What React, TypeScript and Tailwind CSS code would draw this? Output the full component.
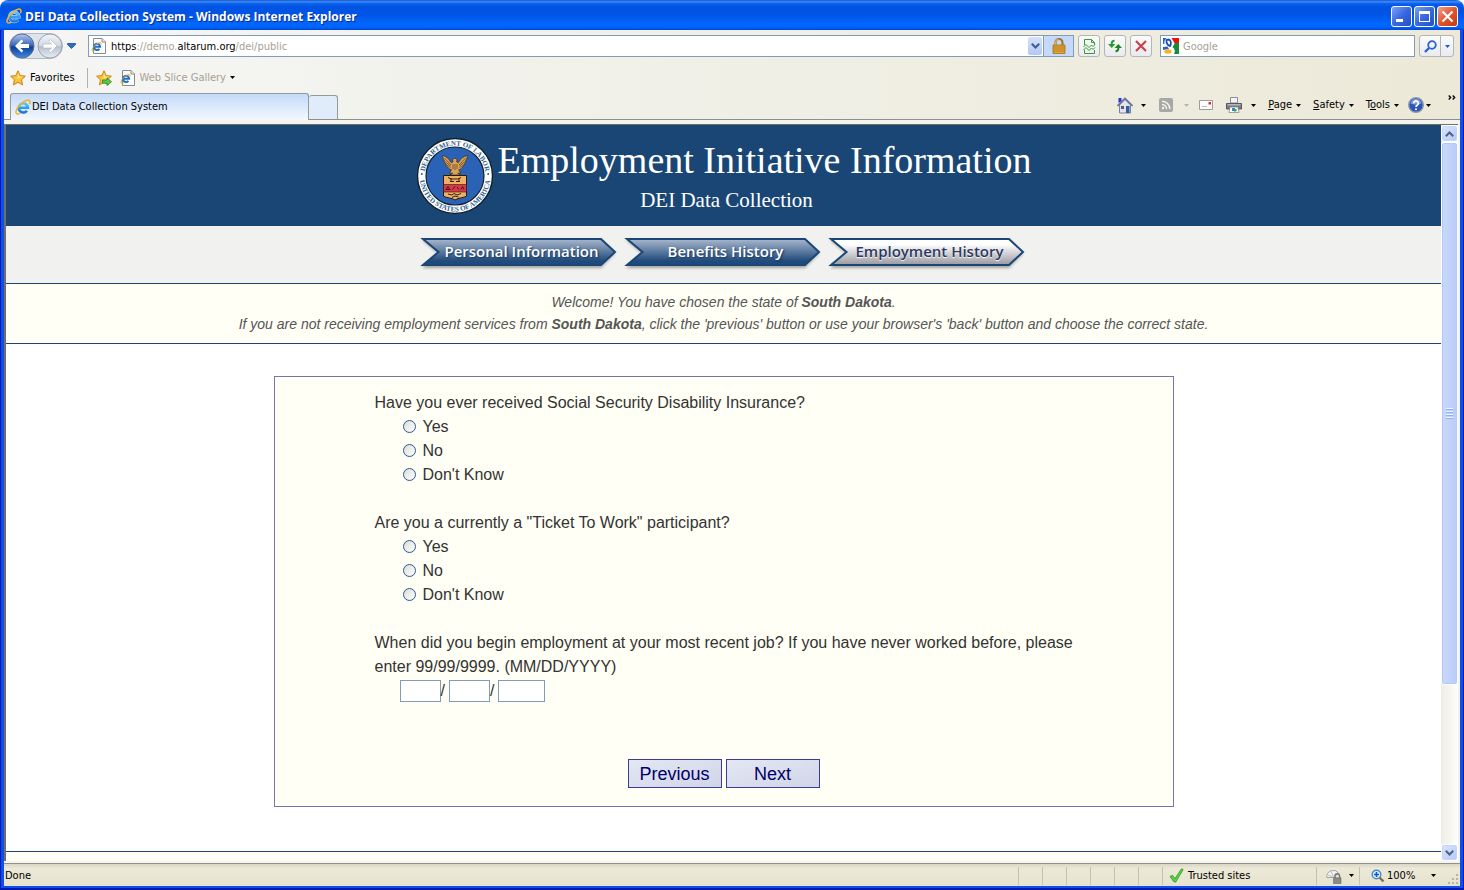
import { useState } from "react";
import type { ReactNode } from "react";

const steps = [
  { label: "Personal Information", current: false },
  { label: "Benefits History", current: false },
  { label: "Employment History", current: true },
];

const answers = ["Yes", "No", "Don't Know"];

const questions = [
  { id: "ssdi", text: "Have you ever received Social Security Disability Insurance?" },
  { id: "ticket", text: 'Are you a currently a "Ticket To Work" participant?' },
];

function Caret({ className = "text-black" }: { className?: string }) {
  return (
    <svg width="5" height="3" viewBox="0 0 5 3" className={`shrink-0 ${className}`}>
      <path d="M0 0h5L2.500 3z" fill="currentColor" />
    </svg>
  );
}

function IeIcon({ size = 16 }: { size?: number }) {
  return (
    <svg width={size} height={size} viewBox="0 0 16 16" fill="none" className="shrink-0">
      <defs>
        <linearGradient id="ie" x1="0" y1="0" x2="0" y2="16" gradientUnits="userSpaceOnUse">
          <stop offset=".15" stopColor="#7cd0ff" />
          <stop offset=".6" stopColor="#2f97ea" />
          <stop offset="1" stopColor="#1560c4" />
        </linearGradient>
      </defs>
      <path d="M4.500 8.700h8.400A4.600 4.600 0 1 0 11.900 11.700" stroke="#cdeaff" strokeWidth="3.400" />
      <path d="M4.500 8.700h8.400A4.600 4.600 0 1 0 11.900 11.700" stroke="url(#ie)" strokeWidth="2.600" />
      <path
        d="M14.600 5.200C15.600 2.600 14.600.6 12 1.200 7.800 2.200 2 8.200 1 12.400c-.6 3 1.800 3 4.200 1.800"
        stroke="#f0b428"
        strokeWidth="1.500"
      />
    </svg>
  );
}

function PageIcon() {
  return (
    <svg width="16" height="16" viewBox="0 0 16 16" fill="none" className="shrink-0">
      <path d="M2.500.5h8.500l3.500 3.500v11.500h-12z" fill="#fff" stroke="#8a8a86" />
      <path d="M11 .5V4h3.500" fill="#e6e6e2" stroke="#8a8a86" />
      <path d="M3.500 8.700h5.600A3.100 3.100 0 1 0 8.400 10.800" stroke="#1c6fd0" strokeWidth="2" />
      <path d="M10 6.500c.4-1.700-.5-2.300-2-1.700C4.800 6 1.600 9.200 1 11.800c-.3 1.700 1 1.900 2.700 1" stroke="#e9a820" />
    </svg>
  );
}

function StarIcon({ add = false }: { add?: boolean }) {
  return (
    <svg width="16" height="16" viewBox="0 0 16 16" className="shrink-0">
      <path
        d="M8 .8l2.200 4.800 5.200.6-3.900 3.500 1.100 5.200L8 12.300l-4.600 2.600 1.100-5.200L.6 6.200l5.200-.6z"
        fill="#fdc43a"
        stroke="#c9831a"
      />
      <path d="M8 3l1.300 3.400 3.400.4-5.200 2z" fill="#ffe795" />
      {add && <path d="M6.500 10h4.500V7.800l4.500 3.900-4.500 3.800v-2.300H6.500z" fill="#5fc64a" stroke="#2a8a26" strokeWidth=".8" />}
    </svg>
  );
}

function NavButtons() {
  return (
    <div className="relative flex h-[26px] w-[54px] shrink-0 items-center justify-between rounded-full border border-[#b4bac6] bg-[#dfe3ea]">
      <button aria-label="Back" className="-ml-px">
        <svg width="26" height="26" viewBox="0 0 26 26" className="block">
          <defs>
            <linearGradient id="back" x2="0" y2="1">
              <stop offset="0" stopColor="#b4c8ec" />
              <stop offset=".45" stopColor="#3f6cbd" />
              <stop offset=".55" stopColor="#0f4099" />
              <stop offset="1" stopColor="#3f8be6" />
            </linearGradient>
          </defs>
          <circle cx="13" cy="13" r="12" fill="url(#back)" stroke="#5b6f96" />
          <path d="M6 13l6.500-6.500 1.800 1.800L11.400 11H20v4h-8.600l2.900 2.700-1.800 1.800z" fill="#fff" />
        </svg>
      </button>
      <button aria-label="Forward" className="-mr-px">
        <svg width="26" height="26" viewBox="0 0 26 26" className="block">
          <defs>
            <linearGradient id="fwd" x2="0" y2="1">
              <stop offset="0" stopColor="#f4f6f9" />
              <stop offset=".48" stopColor="#d3d9e2" />
              <stop offset=".52" stopColor="#b7c0cd" />
              <stop offset="1" stopColor="#e8edf3" />
            </linearGradient>
          </defs>
          <circle cx="13" cy="13" r="12" fill="url(#fwd)" stroke="#9aa3b2" />
          <path
            d="M20 13l-6.500-6.500-1.800 1.800 2.900 2.700H6v4h8.600l-2.900 2.700 1.800 1.800z"
            fill="#fff"
            stroke="#a7b0bd"
            strokeWidth=".6"
          />
        </svg>
      </button>
    </div>
  );
}

function ToolButton({ label, children }: { label: string; children: ReactNode }) {
  return (
    <button
      aria-label={label}
      className="flex size-[22px] shrink-0 items-center justify-center rounded-[3px] border border-[#b3b5ba] bg-linear-to-b from-[#fbfbfa] to-[#eaebee]"
    >
      {children}
    </button>
  );
}

function TitleBar() {
  return (
    <header className="flex h-[30px] shrink-0 items-center rounded-t-lg bg-[linear-gradient(180deg,#1a50cf_0%,#3c8ff8_6%,#0a62ee_12%,#0053e3_22%,#0055e6_50%,#0065fb_75%,#0066ff_90%,#0046d8_100%)] pt-[2px] pr-[6px] pl-[6px]">
      <IeIcon />
      <h1 className="mt-[2px] ml-[3px] flex-1 truncate font-['Open_Sans',sans-serif] text-[12px] leading-4 font-bold text-white [text-shadow:1px_1px_#0a2a8c]">
        DEI Data Collection System - Windows Internet Explorer
      </h1>
      <div className="flex gap-[2px]">
        <button aria-label="Minimize" className="size-[21px] rounded-[3px] border border-white bg-linear-to-br from-[#7ba2f4] via-[#3a67e0] to-[#2450c4]">
          <svg viewBox="0 0 19 19" className="block">
            <path d="M4 12h7v3H4z" fill="#fff" />
          </svg>
        </button>
        <button aria-label="Maximize" className="size-[21px] rounded-[3px] border border-white bg-linear-to-br from-[#7ba2f4] via-[#3a67e0] to-[#2450c4]">
          <svg viewBox="0 0 19 19" className="block">
            <path d="M4 4h11v11H4zM5 7v7h9V7z" fill="#fff" fillRule="evenodd" />
          </svg>
        </button>
        <button aria-label="Close" className="size-[21px] rounded-[3px] border border-white bg-linear-to-br from-[#f0a08c] via-[#e2532c] to-[#c23a12]">
          <svg viewBox="0 0 19 19" className="block">
            <path d="M4.500 4.500l10 10M14.500 4.500l-10 10" stroke="#fff" strokeWidth="2.200" />
          </svg>
        </button>
      </div>
    </header>
  );
}

function AddressRow() {
  return (
    <div className="flex h-8 items-center pr-[6px] pl-[5px]">
      <NavButtons />
      <button aria-label="Recent pages" className="ml-1 p-0">
        <svg width="9" height="6" viewBox="0 0 9 6">
          <path d="M.5.500h8v1L4.500 5.500.500 1.500z" fill="#2a72c8" stroke="#174a8c" strokeWidth=".8" />
        </svg>
      </button>
      <div className="ml-3 flex h-[22px] min-w-0 flex-1 items-center border border-[#7f9db9] bg-white pl-[2px]">
        <PageIcon />
        <div
          role="textbox"
          aria-label="Address"
          contentEditable
          suppressContentEditableWarning
          className="mt-px ml-1 flex-1 truncate text-[#a5a193] outline-none"
        >
          <span className="text-black">https</span>://demo.<span className="text-black">altarum.org</span>/dei/public
        </div>
        <button aria-label="Show address list" className="flex h-[18px] w-[14px] items-center justify-center rounded-xs bg-linear-to-b from-[#d5e1fb] to-[#b3c8f3]">
          <svg width="9" height="6" viewBox="0 0 9 6" fill="none">
            <path d="M.8.800l3.700 3.700L8.200.800" stroke="#3d5a8e" strokeWidth="2" />
          </svg>
        </button>
        <button aria-label="Security report" className="ml-px flex h-5 w-[30px] items-center justify-center border-l border-[#7f9db9] bg-[#c4d9fb]">
          <svg width="14" height="16" viewBox="0 0 14 16" fill="none">
            <path d="M3.500 7.500V4.500a3.500 3.500 0 0 1 7 0v3" stroke="#a07a2c" strokeWidth="2.200" />
            <path d="M3.500 7V4.500a3.500 3.500 0 0 1 3-3.400" stroke="#e8cf8a" strokeWidth=".8" />
            <path d="M1 7h12v8.500H1z" fill="#e0a538" stroke="#a86f14" strokeWidth=".8" />
            <path d="M1 9h12M1 11h12M1 13h12" stroke="#b87812" strokeWidth=".8" />
          </svg>
        </button>
      </div>
      <div className="ml-1 flex gap-1">
        <ToolButton label="Compatibility view">
          <svg width="13" height="15" viewBox="0 0 13 15" fill="none" stroke="#3a9a3a">
            <path d="M1.500 6V.5h7l3 3V6M1.500 11v3.500h10V11" />
            <path d="M8.500.5v3h3" />
            <path d="M.5 8l2.500-2.500 3 3 2.500-2.500 1.500 1.500 2-2M.5 11l2.500-2.500 3 3L8.500 9l1.500 1.500 2-2" />
          </svg>
        </ToolButton>
        <ToolButton label="Refresh">
          <svg width="14" height="14" viewBox="0 0 14 14" fill="none">
            <path d="M6.500 1.700Q3.700 1.700 3.700 4.500V6" stroke="#2e9a30" strokeWidth="2" />
            <path d="M0 5h7.400L3.700 9z" fill="#2e9a30" />
            <path d="M7.500 12.300q2.800 0 2.800-2.800V8" stroke="#1f8424" strokeWidth="2" />
            <path d="M6.600 9H14L10.300 5z" fill="#1f8424" />
          </svg>
        </ToolButton>
        <ToolButton label="Stop">
          <svg width="12" height="12" viewBox="0 0 12 12" fill="none">
            <path d="M1 1l10 10M11 1L1 11" stroke="#c9434a" strokeWidth="2.200" />
          </svg>
        </ToolButton>
      </div>
      <label className="ml-2 flex h-[22px] w-[255px] shrink-0 items-center border border-[#7f9db9] bg-white pl-[2px]">
        <svg width="16" height="16" viewBox="0 0 16 16" className="shrink-0">
          <path d="M0 0h16v16H0z" fill="#fff" />
          <path d="M8.500 0H16v6h-4z" fill="#ee1111" />
          <path d="M12 5h4v11h-5c1.500-3 1-5-1.500-7z" fill="#178a3c" />
          <path d="M0 0h3.500C1.500 2 1 4 1.500 6H0z" fill="#2a5fd0" />
          <path d="M6 1.500c2 1 2.500 4.500 1 6.500C4.500 7.500 3 4.500 3.500 2z" fill="none" stroke="#174bb5" strokeWidth="1.800" />
          <path d="M0 9l4.500-.5L6 11l-6 1z" fill="#2a5fd0" />
          <ellipse cx="5" cy="13.500" rx="3.600" ry="2.200" fill="#f5b41c" />
        </svg>
        <input aria-label="Search" placeholder="Google" className="mt-px ml-1 w-full min-w-0 outline-none placeholder:text-[#a5a193]" />
      </label>
      <div className="ml-1 flex h-[22px] w-[35px] shrink-0 rounded-[3px] border border-[#b3b5ba] bg-linear-to-b from-[#fbfbfa] to-[#eaebee]">
        <button aria-label="Search" className="flex w-[21px] items-center justify-center border-r border-[#b3b5ba]">
          <svg width="13" height="13" viewBox="0 0 13 13" fill="none">
            <circle cx="8" cy="5" r="3.800" stroke="#2a62d8" strokeWidth="1.800" />
            <path d="M5 8l-4 4" stroke="#2a62d8" strokeWidth="2.400" />
          </svg>
        </button>
        <button aria-label="Search options" className="flex flex-1 items-center justify-center">
          <Caret className="text-[#1a5ad6]" />
        </button>
      </div>
    </div>
  );
}

function FavoritesRow() {
  return (
    <div className="flex h-[31px] items-center pl-[6px]">
      <button className="flex items-center gap-1">
        <StarIcon />
        Favorites
      </button>
      <span className="mr-2 ml-3 h-5 w-px bg-[#b5b2a4]" />
      <button aria-label="Add to favorites bar">
        <StarIcon add />
      </button>
      <button className="ml-2 flex items-center gap-1 text-[#a5a193]">
        <PageIcon />
        Web Slice Gallery
        <Caret />
      </button>
    </div>
  );
}

function CommandBar() {
  return (
    <div className="flex h-6 items-center self-start pr-1">
      <button aria-label="Home" className="flex items-center gap-2">
        <svg width="16" height="17" viewBox="0 0 16 17">
          <path d="M2.500 8L8 2.500 13.500 8v8h-11z" fill="#e2e3ee" stroke="#7c80a0" />
          <path d="M.5 9L8 1.500 15.500 9" fill="none" stroke="#6a6f92" strokeWidth="1.600" />
          <path d="M1.500 1h3v3l-3 2z" fill="#2036d0" />
          <path d="M9 9h3.500v7H9z" fill="#2f5f9e" />
          <path d="M4 9h3v3H4z" fill="#555b76" />
        </svg>
        <Caret />
      </button>
      <button aria-label="Feeds" className="ml-[13px] flex items-center gap-[11px]">
        <svg width="14" height="14" viewBox="0 0 14 14" fill="none">
          <rect width="14" height="14" rx="2" fill="#a8a8a4" />
          <path d="M3 3.200A7.800 7.800 0 0 1 10.800 11M3 6.500A4.500 4.500 0 0 1 7.500 11" stroke="#f4f4f0" strokeWidth="1.500" />
          <circle cx="4" cy="10" r="1.200" fill="#f4f4f0" />
        </svg>
        <Caret className="text-[#b8b5a8]" />
      </button>
      <button aria-label="Read mail" className="ml-[10px]">
        <svg width="14" height="10" viewBox="0 0 14 10">
          <path d="M.5.500h13v9H.5z" fill="#fdfdfd" stroke="#9c9c9c" />
          <path d="M9.500 2h2.500v2.500H9.500z" fill="#d83030" />
          <path d="M3 6.500h5" stroke="#b9b9c4" />
        </svg>
      </button>
      <button aria-label="Print" className="ml-[13px] flex items-center gap-[9px]">
        <svg width="16" height="16" viewBox="0 0 16 16">
          <path d="M4.500.5h7V6h-7z" fill="#f2f4f8" stroke="#8b8f98" />
          <path d="M.5 6.500h15V12H.5z" fill="#7a7c80" stroke="#56585c" />
          <path d="M1.500 7h13v1.500h-13z" fill="#b4b6ba" />
          <path d="M4 10h8l1 5.500H3z" fill="#fff" stroke="#7a7c80" strokeWidth=".7" />
          <path d="M6 11h3v3H6z" fill="#2a8ad0" />
          <path d="M8 12h2.500v2.500H8z" fill="#3fa24a" />
        </svg>
        <Caret />
      </button>
      <button className="ml-3 flex items-center gap-1">
        <span>
          <u>P</u>age
        </span>
        <Caret />
      </button>
      <button className="ml-3 flex items-center gap-1">
        <span>
          <u>S</u>afety
        </span>
        <Caret />
      </button>
      <button className="ml-3 flex items-center gap-1">
        <span>
          T<u>o</u>ols
        </span>
        <Caret />
      </button>
      <button aria-label="Help" className="ml-[9px] flex items-center gap-[2px]">
        <svg width="16" height="16" viewBox="0 0 16 16" fill="none">
          <circle cx="8" cy="8" r="7.300" fill="#2c55b8" stroke="#8f98ad" strokeWidth="1.400" />
          <path d="M2.500 6.500a5.600 5.600 0 0 1 11 0c-3 1.500-8 1.500-11 0z" fill="#7d9ce0" />
          <path d="M5.700 6.200a2.300 2.300 0 1 1 3.500 2Q8 8.800 8 10" stroke="#fff" strokeWidth="1.700" />
          <circle cx="8" cy="12.200" r="1" fill="#fff" />
        </svg>
        <Caret />
      </button>
      <button aria-label="More commands" className="mb-4 ml-[17px]">
        <svg width="8" height="5" viewBox="0 0 8 5" fill="none" className="block">
          <path d="M.7.500l2 2-2 2M4.700.500l2 2-2 2" stroke="#000" strokeWidth="1.300" />
        </svg>
      </button>
    </div>
  );
}

function TabRow() {
  return (
    <div className="flex h-[27px] items-end border-b border-[#8f8f8b] pl-[6px]">
      <button className="-mb-px flex h-[27px] w-[299px] items-center rounded-t-[3px] border border-b-0 border-[#919b9c] bg-linear-to-b from-[#c3daf9] to-[#f4f8fd] pl-1 text-left">
        <IeIcon />
        <span className="ml-px">DEI Data Collection System</span>
      </button>
      <button aria-label="New tab" className="h-6 w-[29px] rounded-t-[3px] border border-b-0 border-l-0 border-[#919b9c] bg-[#e1ecfa]" />
      <div className="flex-1" />
      <CommandBar />
    </div>
  );
}

function Seal() {
  return (
    <svg width="78" height="78" viewBox="0 0 78 78" className="shrink-0">
      <defs>
        <path id="seal-top" d="M8.500 39a30.500 30.500 0 0 1 61 0" />
        <path id="seal-bottom" d="M3.600 39a35.400 35.400 0 0 0 70.800 0" />
      </defs>
      <circle cx="39" cy="39" r="37.500" fill="#fff" stroke="#15202e" strokeWidth="1.400" />
      <circle cx="39" cy="39" r="29" fill="#2a63b5" stroke="#15202e" strokeWidth="1.200" />
      <g fontFamily="'Liberation Serif', serif" fontSize="7" fontWeight="700" fill="#2c6090" textAnchor="middle">
        <text>
          <textPath href="#seal-top" startOffset="50%">
            DEPARTMENT OF LABOR
          </textPath>
        </text>
        <text>
          <textPath href="#seal-bottom" startOffset="50%">
            UNITED STATES OF AMERICA
          </textPath>
        </text>
      </g>
      <circle cx="5.800" cy="37" r="1" fill="#2c6090" />
      <circle cx="72.200" cy="37" r="1" fill="#2c6090" />
      <path
        d="M26.500 18.500c3 .5 6.500 3 8.500 7l2-.5-.5-2.500 2.500-1.500 2 1.500-.3 2.500 1.800.5c2-4 5.500-6.500 9-7-.3 2.500-1 4-1.800 5 .2 1.500-.6 3-1.700 3.700 0 1.500-1 2.700-2 3.200-.8 1.300-2 2-3.300 2.300l2 3.500h-3l3 1.800h-11l3-1.800h-3.200l2-3.500c-1.500-.3-2.700-1-3.500-2.300-1-.5-2-1.700-2-3.200-1.100-.7-1.900-2.200-1.700-3.700-.8-1-1.500-2.500-1.800-5z"
        fill="#d9a35c"
        stroke="#3b2612"
        strokeWidth=".7"
      />
      <path
        d="M28.500 21l6.500 7M29 24.500l5.500 4.500M30.500 28l4 2.500M49.500 21L43 28M49 24.500L43.500 29M47.500 28l-4 2.500M37 27v5M39 27v6M41 27v5"
        stroke="#5a3813"
        strokeWidth=".7"
      />
      <path d="M27.500 38.500h23v20.500c-2 2-8 1.500-11.500 4-3.500-2.500-9.500-2-11.500-4z" fill="#f0b063" stroke="#2a1a10" />
      <path d="M27.500 47.500h23v7.500h-23z" fill="#d8384a" stroke="#2a1a10" strokeWidth=".6" />
      <path
        d="M32 40.500l3 1.500h7l3-1.500M34 44.500h4M40 44.500h4M35 41v4M43 41v4M30 52.500l2-3 2 3zM36.500 52.500l2.500-3M41 50l2 2.500M45 52.500l1.500-3 1.500 3M32 57l4 1 2-1.500 3 1.500 4-1.500M36 60.500l3-1.500 3.500 1"
        fill="none"
        stroke="#33200f"
        strokeWidth="1"
      />
    </svg>
  );
}

function Step({ label, current }: { label: string; current: boolean }) {
  return (
    <li className="relative isolate flex h-7 w-[195px] items-center justify-center">
      <svg width="195" height="34" viewBox="0 0 195 34" className="absolute top-0 left-0 -z-10 overflow-visible">
        <defs>
          <linearGradient id="done" x2="0" y2="1">
            <stop offset="0" stopColor="#aab8cd" />
            <stop offset=".85" stopColor="#1f4a7b" />
          </linearGradient>
          <linearGradient id="current" x2="0" y2="1">
            <stop offset=".2" stopColor="#ffffff" />
            <stop offset="1" stopColor="#99989f" />
          </linearGradient>
          <filter id="soft">
            <feGaussianBlur stdDeviation="1.500" />
          </filter>
        </defs>
        <path d="M0 3h179l14 13.500L179 31H0l16-14.500z" fill="#00000055" filter="url(#soft)" />
        <path d="M1 2h178L193 15l-14 13H1l15.500-13z" fill={current ? "url(#current)" : "url(#done)"} stroke="#1a4676" strokeWidth="2" />
      </svg>
      <a
        href="#"
        className={
          current
            ? "pl-1 text-[#2b3960] [text-shadow:0_1px_1px_#ffffff]"
            : "pl-1 text-white [text-shadow:1px_1px_2px_#12335a]"
        }
      >
        {label}
      </a>
    </li>
  );
}

function Question({ id, text }: { id: string; text: string }) {
  const [value, setValue] = useState("");

  return (
    <fieldset className="mb-6">
      <legend>{text}</legend>
      {answers.map((answer) => (
        <label key={answer} className="ml-7 flex w-fit items-center gap-[7px]">
          <input
            type="radio"
            name={id}
            value={answer}
            checked={value === answer}
            onChange={() => setValue(answer)}
            className="mb-[2px] size-[13px] appearance-none rounded-full border border-[#2a5a8c] bg-linear-to-br from-[#dcdcd7] to-white checked:bg-[#21a121]"
          />
          {answer}
        </label>
      ))}
    </fieldset>
  );
}

function PageContent() {
  return (
    <main className="flex min-w-0 flex-1 flex-col bg-white font-['Liberation_Sans',Arial,sans-serif] text-[16px] leading-6 text-[#333333]">
      <div className="flex h-[101px] items-center justify-center gap-1 bg-[#1a4676] font-['Liberation_Serif',serif] text-white">
        <Seal />
        <div className="pt-1">
          <h2 className="text-[38px] leading-10">Employment Initiative Information</h2>
          <p className="mt-1 pr-[76px] text-center text-[21px] leading-8">DEI Data Collection</p>
        </div>
      </div>
      <ol className="flex h-[58px] justify-center gap-[9px] border-b border-[#1a4676] bg-[#f1f1ef] pt-[11px] font-['Open_Sans',sans-serif] text-[15px] font-semibold">
        {steps.map((step) => (
          <Step key={step.label} {...step} />
        ))}
      </ol>
      <div className="border-b border-[#1a4676] bg-[#fffff5] pt-[7px] pb-2 text-center text-[14px] leading-[22px] text-[#555555] italic">
        <p>
          Welcome! You have chosen the state of <b>South Dakota</b>.
        </p>
        <p>
          If you are not receiving employment services from <b>South Dakota</b>, click the 'previous' button or use your
          browser's 'back' button and choose the correct state.
        </p>
      </div>
      <form
        className="mx-auto mt-8 mb-11 w-full max-w-[900px] border border-[#7474ae] bg-[#fffff5] pt-[14px] pb-[18px]"
        onSubmit={(e) => e.preventDefault()}
      >
        <div className="pr-[90px] pl-[100px]">
          {questions.map((q) => (
            <Question key={q.id} {...q} />
          ))}
          <fieldset>
            <legend>
              When did you begin employment at your most recent job? If you have never worked before, please enter
              99/99/9999. (MM/DD/YYYY)
            </legend>
            <div className="ml-[25px] flex h-6 items-center">
              <input aria-label="Month" maxLength={2} className="h-[22px] w-[41px] border border-[#7f9db9] bg-white px-1" />
              <span className="mr-1">/</span>
              <input aria-label="Day" maxLength={2} className="h-[22px] w-[41px] border border-[#7f9db9] bg-white px-1" />
              <span className="mr-1">/</span>
              <input aria-label="Year" maxLength={4} className="h-[22px] w-[47px] border border-[#7f9db9] bg-white px-1" />
            </div>
          </fieldset>
        </div>
        <div className="mt-14 flex justify-center gap-1 text-[18px] text-[#000066]">
          <button type="button" className="h-[29px] w-[94px] border border-[#3c3c94] bg-linear-to-br from-[#e4e8f3] to-[#d0d4e8]">
            Previous
          </button>
          <button type="submit" className="h-[29px] w-[94px] border border-[#3c3c94] bg-linear-to-br from-[#e4e8f3] to-[#d0d4e8]">
            Next
          </button>
        </div>
      </form>
      <div className="min-h-[9px] flex-1 border-t border-[#1a4676] bg-[#fffff5]" />
    </main>
  );
}

function ScrollButton({ label, d }: { label: string; d: string }) {
  return (
    <button
      aria-label={label}
      className="flex h-[17px] w-full shrink-0 items-center justify-center rounded-[3px] border border-white bg-linear-to-br from-[#dbe6fd] to-[#b4c8f6] shadow-[inset_0_0_0_1px_#c3d3fb]"
    >
      <svg width="9" height="6" viewBox="0 0 9 6" fill="none">
        <path d={d} stroke="#4d6185" strokeWidth="2" />
      </svg>
    </button>
  );
}

function ScrollBar() {
  return (
    <div className="flex w-[17px] shrink-0 flex-col bg-linear-to-r from-[#eeede5] to-[#fefefb]">
      <ScrollButton label="Scroll up" d="M.8 5.200L4.500 1.500 8.200 5.200" />
      <div className="flex flex-[543] flex-col items-center justify-center gap-px rounded-[3px] border border-white bg-linear-to-r from-[#c9d8fc] to-[#b9cbf8] shadow-[inset_0_0_0_1px_#b5c8f5]">
        {[0, 1, 2, 3].map((n) => (
          <span key={n} className="h-[2px] w-[7px] border-b border-[#8cb0f8] bg-[#eef4fe]" />
        ))}
      </div>
      <div className="flex-[159]" />
      <ScrollButton label="Scroll down" d="M.8.800L4.500 4.500 8.200.800" />
    </div>
  );
}

function StatusBar() {
  return (
    <footer className="flex h-[23px] shrink-0 items-center border-t border-[#8f8f85] bg-linear-to-b from-[#d9d6c6] via-[#ece9d8] via-20% to-[#e6e2cf] pt-px pl-px">
      <span className="flex-1">Done</span>
      {[0, 1, 2, 3, 4, 5].map((n) => (
        <span key={n} className="h-[18px] w-6 border-l border-[#c5c2b2]" />
      ))}
      <div className="flex h-[18px] w-[154px] items-center gap-1 border-l border-[#c5c2b2] pl-[6px]">
        <svg width="15" height="15" viewBox="0 0 15 15">
          <path d="M1 8.500l2.500-1.200L6 10.500 12.500.8l1.700.7L6.800 14H5z" fill="#5fce3e" stroke="#2d9a24" strokeWidth=".8" />
        </svg>
        Trusted sites
      </div>
      <button aria-label="Protected mode" className="flex h-[18px] w-[43px] items-center gap-[7px] border-l border-[#c5c2b2] pl-[9px]">
        <svg width="16" height="16" viewBox="0 0 16 16" fill="none">
          <path d="M.8 9.500A6.500 6.500 0 0 1 12.500 5L8 9.500z" fill="#f1f1f1" stroke="#a5a5a5" />
          <path d="M5 3.500l3 6M2 7l6 2.500" stroke="#c0c0c0" />
          <path d="M9 10V8a2.300 2.300 0 0 1 4.600 0v2" stroke="#777" strokeWidth="1.400" />
          <path d="M7.500 9.800h7.500v5.700H7.500z" fill="#8a8a8a" stroke="#666" strokeWidth=".6" />
        </svg>
        <Caret />
      </button>
      <button className="flex h-[18px] w-[101px] items-center border-l border-[#c5c2b2] pl-[11px]">
        <svg width="14" height="14" viewBox="0 0 14 14" fill="none" className="mr-[2px]">
          <path d="M8.500 8.500l4 4" stroke="#8c6a3c" strokeWidth="2.400" />
          <circle cx="5.500" cy="5.500" r="4.300" fill="#dff0fd" stroke="#3f8ad0" strokeWidth="1.400" />
          <path d="M5.500 3v5M3 5.500h5" stroke="#1458b8" strokeWidth="1.600" />
        </svg>
        <span className="mr-4">100%</span>
        <Caret />
        <svg width="11" height="11" viewBox="0 0 11 11" className="mt-2 mr-px ml-auto">
          <path d="M8 0h2v2H8zM4 4h2v2H4zM8 4h2v2H8zM0 8h2v2H0zM4 8h2v2H4zM8 8h2v2H8z" fill="#b8b4a2" />
        </svg>
      </button>
    </footer>
  );
}

export default function App() {
  return (
    <div className="flex min-h-screen flex-col bg-white font-['DejaVu_Sans_Condensed','DejaVu_Sans',sans-serif] text-[11px] leading-4 text-black">
      <TitleBar />
      <div className="flex flex-1 flex-col border-x border-b-2 border-[#0019b0]">
        <div className="flex flex-1 flex-col border-x-3 border-b-2 border-[#0d4fe8]">
          <nav className="bg-linear-to-r from-[#f5f6f5] to-[#ece9d8]">
            <AddressRow />
            <FavoritesRow />
            <TabRow />
          </nav>
          <div className="flex flex-1 border-t-4 border-r-2 border-b-2 border-[#f4f3ee]">
            <div className="flex flex-1 border-t border-l-2 border-[#716f64]">
              <PageContent />
              <ScrollBar />
            </div>
          </div>
          <StatusBar />
        </div>
      </div>
    </div>
  );
}
